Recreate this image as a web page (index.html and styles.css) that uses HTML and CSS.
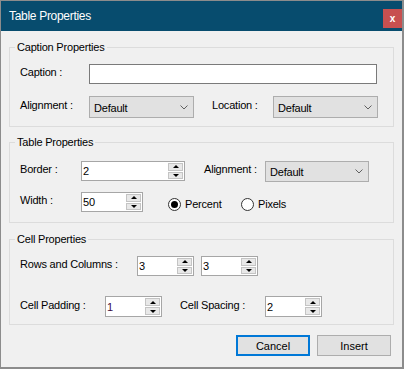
FILE: index.html
```html
<!DOCTYPE html>
<html lang="en">

<head>
    <meta charset="UTF-8">
    <meta name="viewport" content="width=device-width, initial-scale=1.0">
    <title>Table Properties</title>
    <link rel="stylesheet" href="styles.css">
</head>

<body>
    <div class="window">
        <div class="titlebar">
            <span class="title">Table Properties</span>
            <span class="close">x</span>
        </div>

        <div class="content">
            <!-- Caption group -->
            <fieldset class="group">
                <legend>Caption Properties</legend>
                <div class="group-body caption-body">
                    <div class="row row-20">
                        <label class="label w69">Caption :</label>
                        <input type="text" class="textbox caption-input">
                    </div>
                    <div class="row row-22">
                        <label class="label w69">Alignment :</label>
                        <div class="dropdown w105">
                            <span>Default</span>
                            <svg width="8" height="5" viewBox="0 0 8 5"><path d="M0.5 0.5 L4 4 L7.5 0.5" fill="none" stroke="#606060" stroke-width="1"/></svg>
                        </div>
                        <label class="label w61 ml18">Location :</label>
                        <div class="dropdown w105">
                            <span>Default</span>
                            <svg width="8" height="5" viewBox="0 0 8 5"><path d="M0.5 0.5 L4 4 L7.5 0.5" fill="none" stroke="#606060" stroke-width="1"/></svg>
                        </div>
                    </div>
                </div>
            </fieldset>

            <!-- Table group -->
            <fieldset class="group">
                <legend>Table Properties</legend>
                <div class="group-body table-body">
                    <div class="row row-22">
                        <label class="label w61">Border :</label>
                        <div class="spin w104">
                            <input type="text" class="spin-value" value="2">
                            <div class="spin-buttons"><span class="up"></span><span class="down"></span></div>
                        </div>
                        <label class="label w61 ml19">Alignment :</label>
                        <div class="dropdown w104 h21">
                            <span>Default</span>
                            <svg width="8" height="5" viewBox="0 0 8 5"><path d="M0.5 0.5 L4 4 L7.5 0.5" fill="none" stroke="#606060" stroke-width="1"/></svg>
                        </div>
                    </div>
                    <div class="row row-20">
                        <label class="label w61">Width :</label>
                        <div class="spin w62">
                            <input type="text" class="spin-value" value="50">
                            <div class="spin-buttons"><span class="up"></span><span class="down"></span></div>
                        </div>
                        <div class="radios">
                            <label class="radio percent"><span class="dot checked"></span>Percent</label>
                            <label class="radio"><span class="dot"></span>Pixels</label>
                        </div>
                    </div>
                </div>
            </fieldset>

            <!-- Cell group -->
            <fieldset class="group">
                <legend>Cell Properties</legend>
                <div class="group-body cell-body">
                    <div class="row row-20">
                        <label class="label w117">Rows and Columns :</label>
                        <div class="spin w57">
                            <input type="text" class="spin-value" value="3">
                            <div class="spin-buttons"><span class="up"></span><span class="down"></span></div>
                        </div>
                        <div class="spin w57 ml7">
                            <input type="text" class="spin-value" value="3">
                            <div class="spin-buttons"><span class="up"></span><span class="down"></span></div>
                        </div>
                    </div>
                    <div class="row row-21">
                        <label class="label w85">Cell Padding :</label>
                        <div class="spin w57">
                            <input type="text" class="spin-value caret" value="1">
                            <div class="spin-buttons"><span class="up"></span><span class="down"></span></div>
                        </div>
                        <label class="label w85 ml18">Cell Spacing :</label>
                        <div class="spin w57">
                            <input type="text" class="spin-value" value="2">
                            <div class="spin-buttons"><span class="up"></span><span class="down"></span></div>
                        </div>
                    </div>
                </div>
            </fieldset>

            <div class="actions">
                <button type="button" class="btn btn-default">Cancel</button>
                <button type="button" class="btn">Insert</button>
            </div>
        </div>
    </div>
</body>

</html>
```

FILE: styles.css
```css
body {
    margin: 0;
    font-family: 'Liberation Sans', Arial, sans-serif;
    font-size: 11px;
    letter-spacing: -0.2px;
    color: #000;
}

.window {
    width: 404px;
    height: 369px;
    box-sizing: border-box;
    border-style: solid;
    border-color: #8c8c8c;
    border-width: 1px 2px 2px 1px;
    background-color: #f0f0f0;
    display: flex;
    flex-direction: column;
}

.titlebar {
    height: 30px;
    flex-shrink: 0;
    background-color: #074c6e;
    color: #fff;
    display: flex;
    justify-content: space-between;
    padding-left: 8px;
}

.title {
    font-size: 12px;
    letter-spacing: -0.3px;
    line-height: 30px;
}

.close {
    width: 19px;
    height: 19px;
    margin-top: 8px;
    background-color: #c75050;
    color: #fff;
    font-weight: bold;
    font-size: 10px;
    letter-spacing: 0;
    display: flex;
    align-items: center;
    justify-content: center;
}

.content {
    padding: 9px 8px 0;
    display: flex;
    flex-direction: column;
}

.group {
    margin: 0;
    padding: 0;
    min-width: 0;
    border: 1px solid #dcdcdc;
}

.group + .group {
    margin-top: 8px;
}

.group:last-of-type {
    margin-top: 9px;
}

legend {
    margin-left: 5px;
    padding: 0 2px;
    line-height: 14px;
}

.group-body {
    display: flex;
    flex-direction: column;
    padding-left: 10px;
}

.caption-body {
    padding-top: 10px;
    padding-bottom: 8px;
    gap: 12px;
}

.table-body {
    padding-top: 11px;
    padding-bottom: 10px;
    gap: 10px;
}

.cell-body {
    padding-top: 10px;
    padding-bottom: 7px;
    gap: 20px;
}

.row {
    display: flex;
    align-items: center;
}

.row-20 { height: 20px; }
.row-21 { height: 21px; }
.row-22 { height: 22px; }

.label {
    flex-shrink: 0;
    margin-bottom: 4px;
    white-space: nowrap;
}

.w57 { width: 57px; }
.w61 { width: 61px; }
.w62 { width: 62px; }
.w69 { width: 69px; }
.w85 { width: 85px; }
.w104 { width: 104px; }
.w105 { width: 105px; }
.w117 { width: 117px; }
.ml7 { margin-left: 7px; }
.ml18 { margin-left: 18px; }
.ml19 { margin-left: 19px; }

.textbox {
    box-sizing: border-box;
    height: 20px;
    margin: 0;
    padding: 0 2px;
    border: 1px solid #7a7a7a;
    background-color: #fff;
    font: inherit;
    outline: none;
}

.caption-input {
    width: 288px;
}

.dropdown {
    box-sizing: border-box;
    height: 22px;
    padding: 1px 5px 0 4px;
    border: 1px solid #adadad;
    background-color: #e1e1e1;
    display: flex;
    align-items: center;
    justify-content: space-between;
}

.dropdown.h21 {
    height: 21px;
}

.dropdown svg {
    display: block;
}

/* numeric up/down */
.spin {
    box-sizing: border-box;
    height: 20px;
    border: 1px solid #a6a6a6;
    background-color: #fff;
    display: flex;
}

.row-21 .spin {
    height: 21px;
}

.spin-value {
    flex: 1;
    min-width: 0;
    margin: 0;
    padding: 0 0 0 1px;
    border: none;
    background: transparent;
    font: inherit;
    outline: none;
}

.spin-value.caret {
    color: #3c0a3c;
}

.spin-buttons {
    width: 15px;
    display: flex;
    flex-direction: column;
    padding: 1px;
    gap: 1px;
    background-color: #fff;
}

.spin-buttons span {
    flex: 1;
    border: 1px solid #c4c4c4;
    background-color: #e8e8e8;
    display: flex;
    align-items: center;
    justify-content: center;
}

.spin-buttons .up::after {
    content: '';
    border-left: 3px solid transparent;
    border-right: 3px solid transparent;
    border-bottom: 3px solid #000;
}

.spin-buttons .down::after {
    content: '';
    border-left: 3px solid transparent;
    border-right: 3px solid transparent;
    border-top: 3px solid #000;
}

/* radio buttons */
.radios {
    display: flex;
    margin-left: 25px;
    margin-top: 4px;
}

.radio {
    display: flex;
    align-items: center;
    gap: 4px;
}

.radio.percent {
    width: 73px;
}

.dot {
    box-sizing: border-box;
    width: 13px;
    height: 13px;
    border: 1px solid #333;
    border-radius: 50%;
    background-color: #fff;
    display: flex;
    align-items: center;
    justify-content: center;
}

.dot.checked::after {
    content: '';
    width: 7px;
    height: 7px;
    border-radius: 50%;
    background-color: #000;
}

.actions {
    display: flex;
    justify-content: flex-end;
    gap: 7px;
    margin-top: 10px;
    margin-right: 3px;
}

.btn {
    box-sizing: border-box;
    width: 74px;
    height: 21px;
    padding: 0;
    border: 1px solid #adadad;
    background-color: #e1e1e1;
    font: inherit;
    color: #000;
}

.btn-default {
    border: 2px solid #0078d7;
}
```
